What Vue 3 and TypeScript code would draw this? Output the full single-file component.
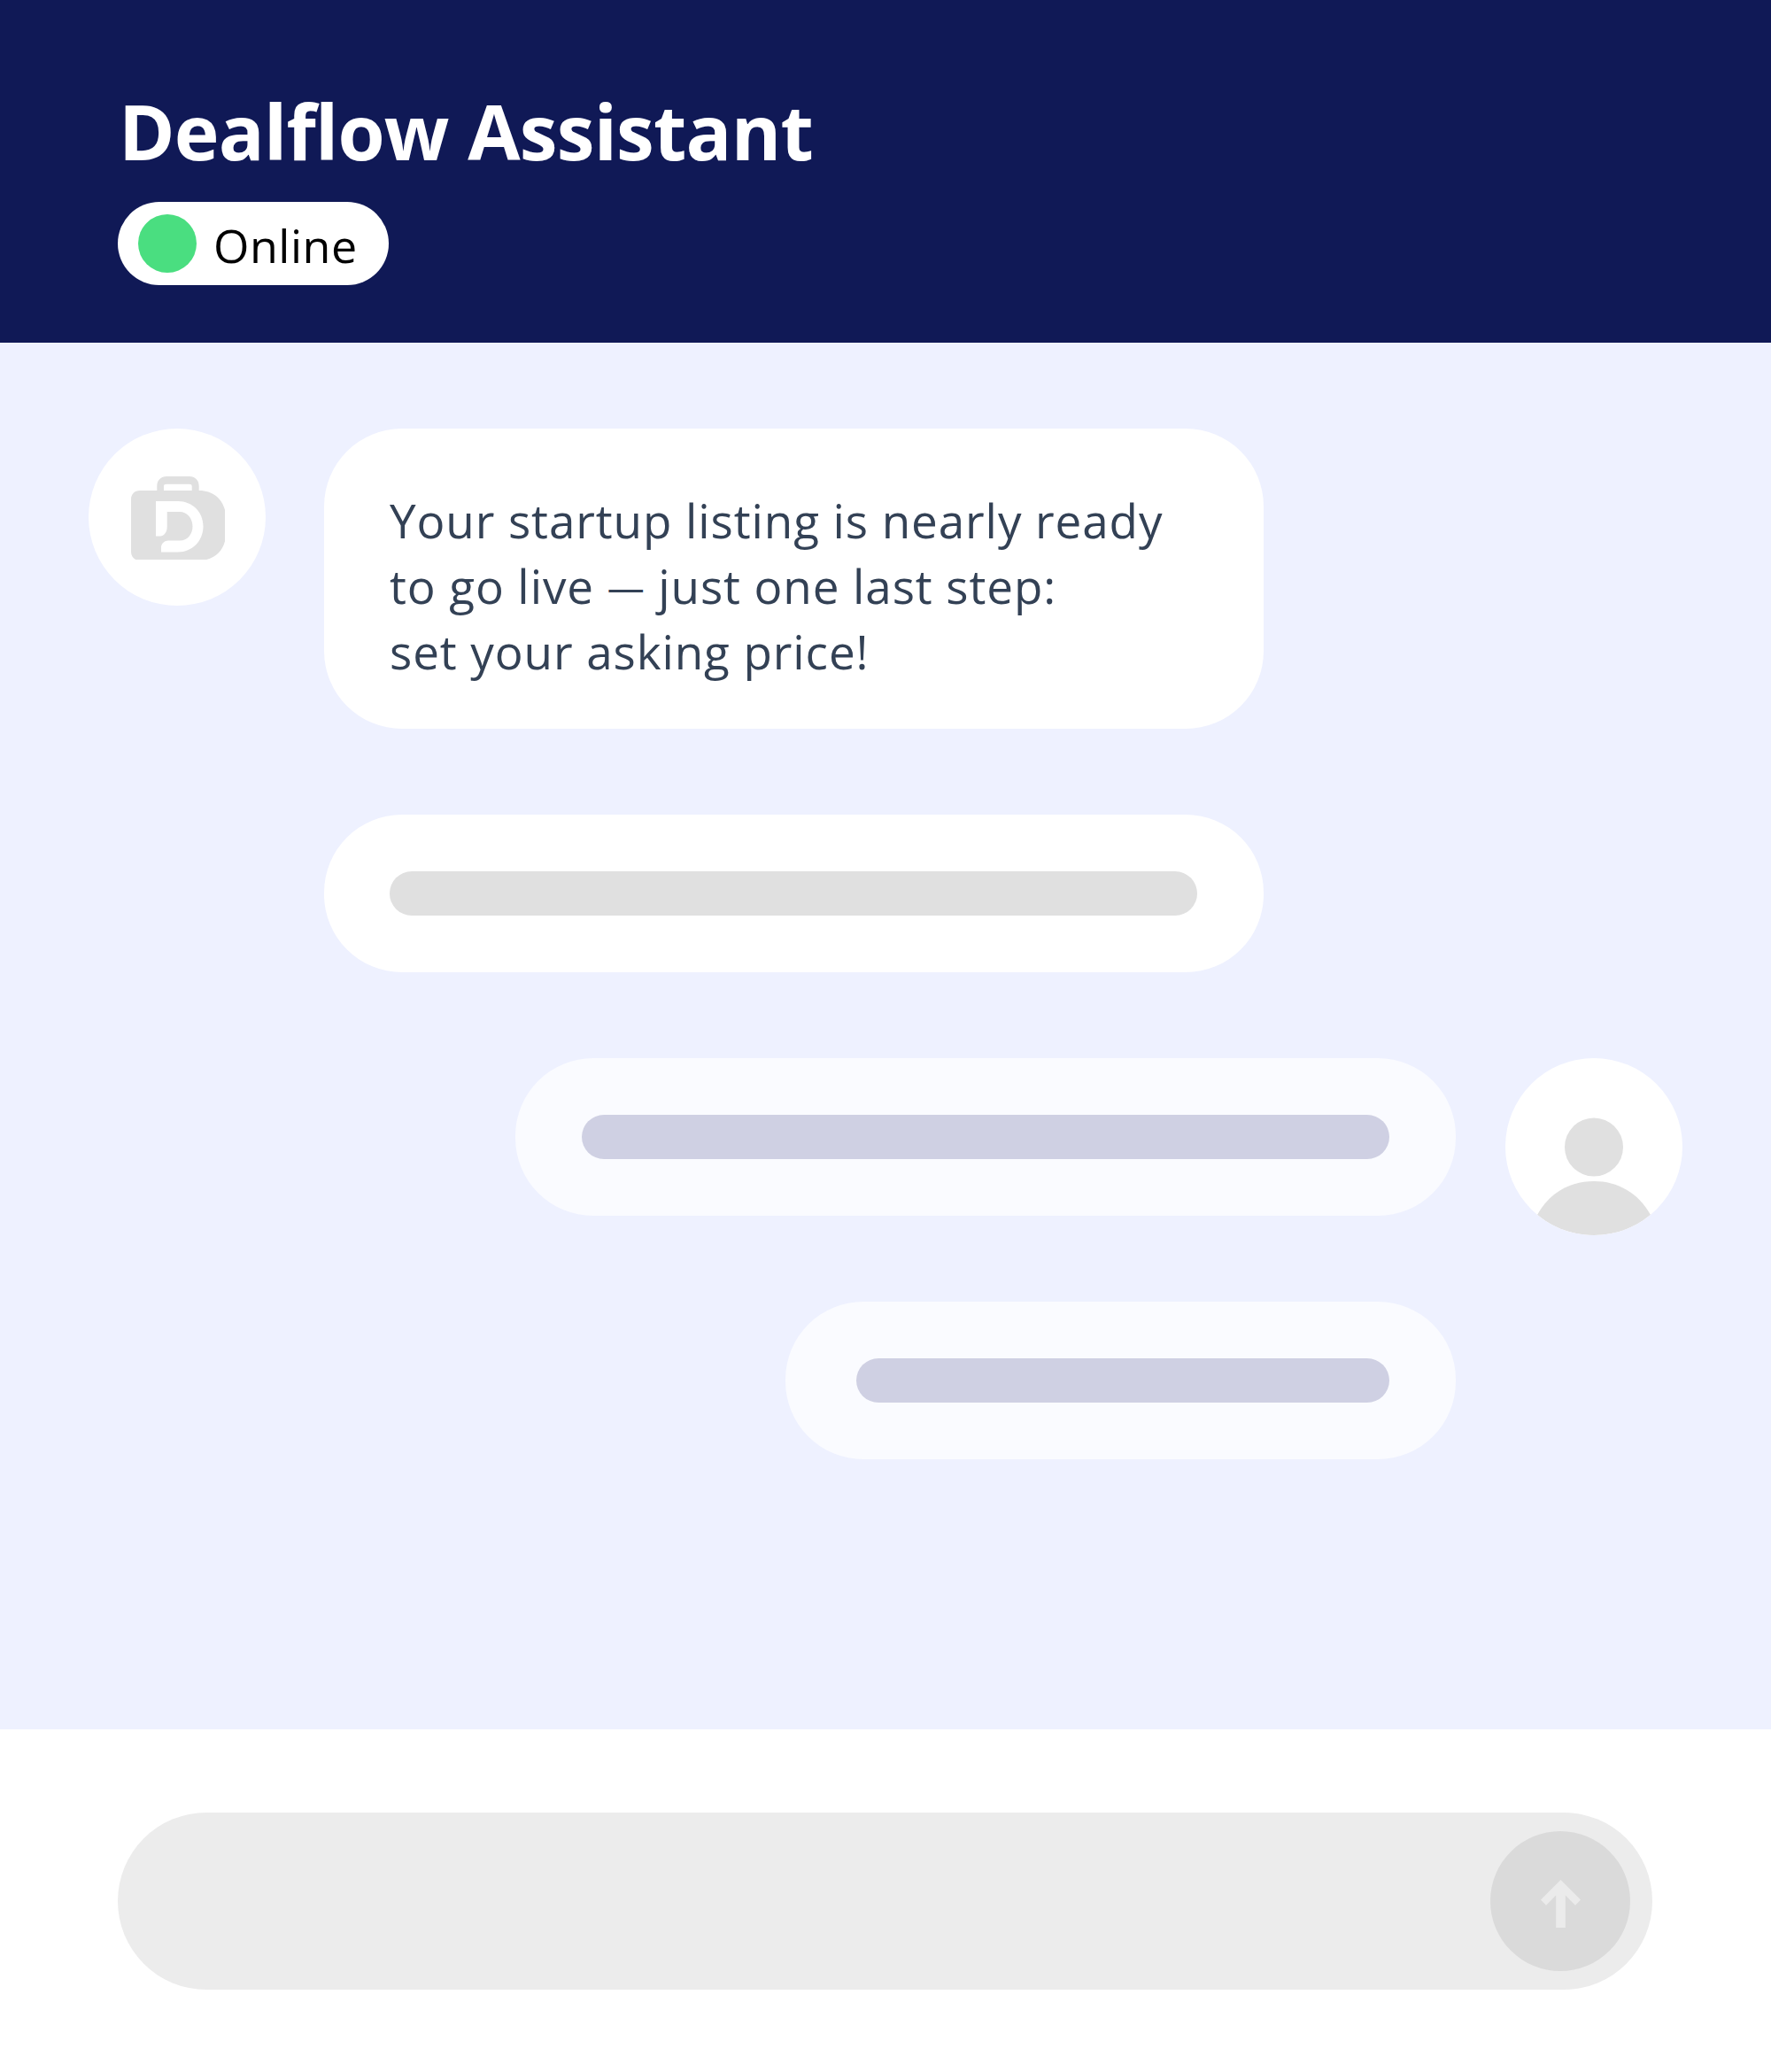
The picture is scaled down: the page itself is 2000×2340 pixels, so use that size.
<script setup lang="ts">
const intro = 'Your startup listing is nearly ready'
const outro = 'set your asking price!'
</script>

<template>
  <div class="page">
    <header class="header">
      <h1 class="title">Dealflow Assistant</h1>
      <div class="status">
        <span class="dot"></span>
        <span class="status-text">Online</span>
      </div>
    </header>

    <main class="chat">
      <div class="row">
        <div class="avatar">
          <svg class="logo" viewBox="-2 -2 108 96" width="108" height="96">
            <path fill="#e0e0e0" fill-rule="evenodd" d="M29.3 16V11C29.3 4 34 0 40 0H66C72 0 76.700 4 76.700 11V16H77C95 16 107 29 107 46V65C107 82 95 95 77 95H10C4 95 0 91 0 85V26C0 20 4 16 10 16ZM37 16H68.700V11C68.700 9.500 67.500 8.700 66 8.700H40C38 8.700 37 9.500 37 11Z" />
            <path fill="#ffffff" d="M28 28H53C69 28 81.500 40 81.500 56.500C81.500 73 69 85.500 53 85.500H34V80C34 76 38 72.500 42 72.500H55C64 72.500 69.500 65 69.500 56.500C69.500 47 63 40 55 40H40.700V57C40.700 63 37 67.500 33 67.500H28Z" />
          </svg>
        </div>
        <div class="bubble bubble-text">
          <p class="line">{{ intro }}</p>
          <p class="line">to go live <span class="dash">—</span> just one last step:</p>
          <p class="line">{{ outro }}</p>
        </div>
      </div>

      <div class="row indented">
        <div class="bubble bubble-bar"><div class="bar grey"></div></div>
      </div>

      <div class="row right">
        <div class="bubble user wide"><div class="bar lilac"></div></div>
        <div class="avatar">
          <svg viewBox="0 0 200 200" width="200" height="200">
            <circle cx="100" cy="100.500" r="33" fill="#e0e0e0" />
            <path fill="#e0e0e0" d="M36 177C50 152 73 139 100 139C127 139 150 152 164 177C146 192 124 200 100 200C76 200 54 192 36 177Z" />
          </svg>
        </div>
      </div>

      <div class="row right last">
        <div class="bubble user narrow"><div class="bar lilac"></div></div>
      </div>
    </main>

    <footer class="footer">
      <div class="input">
        <button class="send" type="button" aria-label="Send">
          <svg class="arrow" viewBox="0 0 45 54" width="45" height="54">
            <path fill="#ebebeb" d="M22.500 0L45 22.500L39 28.700L27.800 17.500V54H17.200V17.500L6 28.700L0 22.500Z" />
          </svg>
        </button>
      </div>
    </footer>
  </div>
</template>

<style>
html, body { margin: 0; background: #fff; }
</style>

<style scoped>
.page {
  width: 2000px;
  height: 2340px;
  display: flex;
  flex-direction: column;
  font-family: "Open Sans", "Noto Sans", sans-serif;
}
.header {
  height: 387px;
  box-sizing: border-box;
  background: #101956;
  padding: 98px 133px 0;
}
.title {
  margin: 0;
  font-size: 86px;
  line-height: 100px;
  font-weight: 700;
  color: #fff;
  padding-left: 1px;
  letter-spacing: -0.8px;
  white-space: nowrap;
}
.status {
  margin-top: 30px;
  width: 306px;
  height: 94px;
  border-radius: 47px;
  background: #fff;
  display: flex;
  align-items: center;
  box-sizing: border-box;
  padding-left: 23px;
  gap: 19px;
}
.dot {
  width: 66px;
  height: 66px;
  border-radius: 50%;
  background: #4ade80;
}
.status-text {
  font-size: 52px;
  color: #000;
  line-height: 1;
  letter-spacing: 0.5px;
  margin-top: 4px;
}
.chat {
  height: 1566px;
  box-sizing: border-box;
  background: #eef1ff;
  padding: 97px 100px 0;
  display: flex;
  flex-direction: column;
}
.row {
  display: flex;
  align-items: flex-start;
  gap: 66px;
}
.row + .row { margin-top: 97px; }
.row + .last { margin-top: 75px; padding-right: 256px; }
.indented { padding-left: 266px; }
.right { justify-content: flex-end; gap: 56px; }
.avatar {
  width: 200px;
  height: 200px;
  flex: none;
  border-radius: 50%;
  background: #fff;
  display: flex;
  align-items: center;
  justify-content: center;
  overflow: hidden;
}
.bubble {
  border-radius: 88px;
  background: #fff;
  box-sizing: border-box;
  flex: none;
}
.bubble-text {
  width: 1061px;
  height: 339px;
  padding: 67px 74px 0;
}
.line {
  margin: 0;
  font-size: 53px;
  line-height: 74px;
  color: #334155;
  white-space: nowrap;
  letter-spacing: 0.9px;
}
.dash {
  font-size: 42px;
  line-height: 1;
  vertical-align: 3px;
}
.bubble-bar, .user {
  height: 178px;
  display: flex;
  align-items: center;
}
.bubble-bar { width: 1061px; padding: 0 75px 0 74px; }
.user { background: #fafbff; padding: 0 75px; }
.wide { width: 1062px; }
.narrow { width: 757px; padding-left: 80px; }
.bar {
  flex: 1;
  height: 50px;
  border-radius: 25px;
}
.grey { background: #e0e0e0; }
.lilac { background: #cfd0e3; }
.footer {
  flex: 1;
  background: #fff;
  padding: 94px 134px 0 133px;
}
.input {
  height: 200px;
  border-radius: 100px;
  background: #ececec;
  display: flex;
  align-items: center;
  justify-content: flex-end;
  padding-right: 25px;
}
.send {
  width: 158px;
  height: 158px;
  border: 0;
  padding: 0;
  border-radius: 50%;
  background: #dadada;
  display: flex;
  align-items: center;
  justify-content: center;
}
.arrow { margin-top: 6px; }
</style>
